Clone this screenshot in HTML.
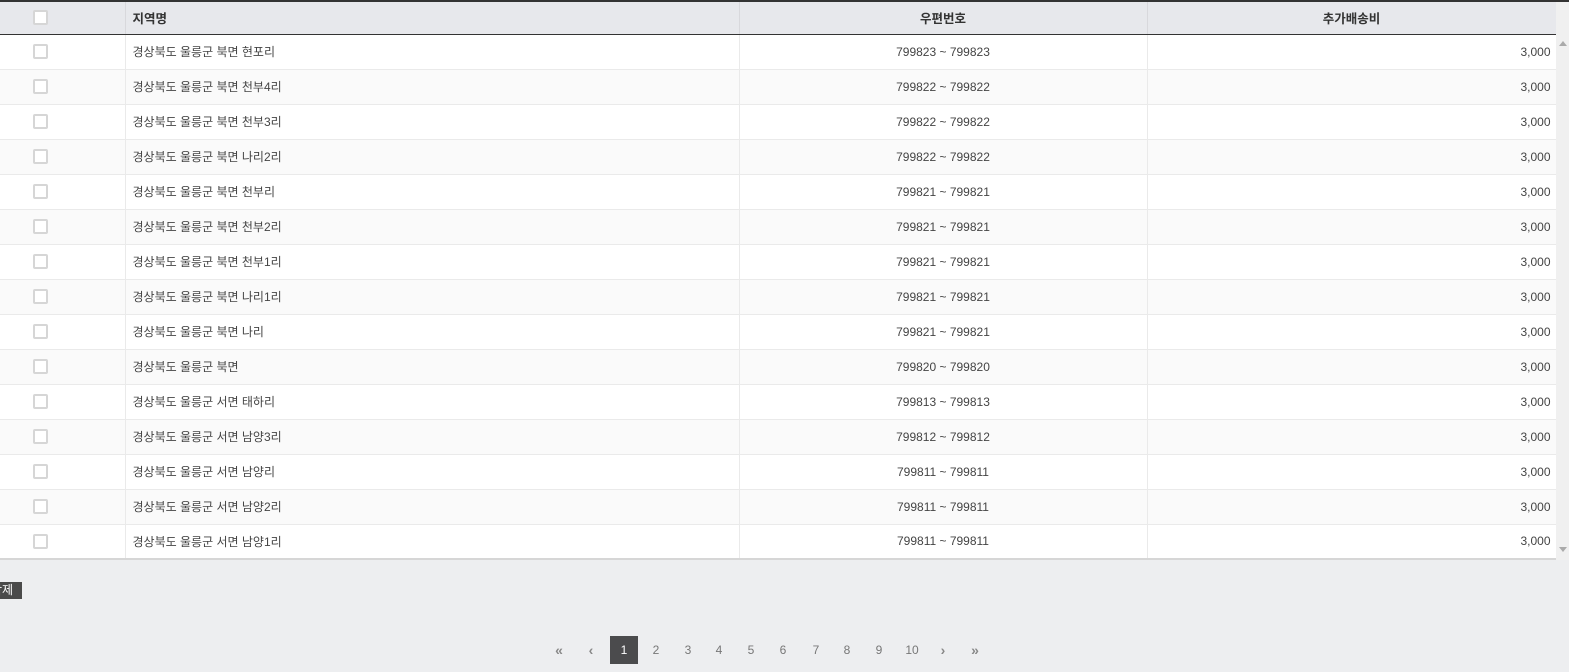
<!DOCTYPE html>
<html><head><meta charset="utf-8"><style>
*{margin:0;padding:0;box-sizing:border-box}
body{width:1569px;height:672px;overflow:hidden;background:#edeef0;font-family:"Liberation Sans","Noto Sans CJK KR",sans-serif;font-size:12px;color:#444;position:relative}
.top{position:absolute;left:0;top:0;width:1569px;height:2px;background:#333}
table{position:absolute;left:0;top:2px;width:1556px;border-collapse:collapse;table-layout:fixed}
th{height:32px;background:#e7e8ec;border-bottom:1px solid #333;border-right:1px solid #d8d8dc;font-weight:bold;color:#333;font-size:12.5px;padding:0}
td{height:35px;border-bottom:1px solid #eaeaea;border-right:1px solid #eaeaea;background:#fff;padding:0}
tr:nth-child(odd) td{background:#fafafa}
tr:last-child td{border-bottom:2px solid #d6d6d6}
.cb{width:15px;height:15px;border:2px solid #d6d6d6;background:#fff;border-radius:2px;margin-left:33px;display:block}
.l{text-align:left;padding-left:7px}.c{text-align:center}.r{text-align:right;padding-right:5px}
.sb{position:absolute;left:1556px;top:2px;width:13px;height:558px;background:#f0f0f0}
.btn{position:absolute;left:-12px;top:582px;width:34px;height:17px;background:#4a4a4a;color:#fff;font-size:12px;line-height:17px;white-space:nowrap;padding-left:3px}
.pg{position:absolute;top:636px;height:28px;width:28px;line-height:28px;text-align:center;color:#777;font-size:12px}
.on{background:#4b4b4d;color:#fff}
.ar{font-weight:bold;color:#888;font-size:14px}
</style></head><body>
<div class="top"></div>
<table>
<colgroup><col style="width:125px"><col style="width:614px"><col style="width:408px"><col style="width:409px"></colgroup>
<tr><th><span class="cb"></span></th><th class="l">지역명</th><th>우편번호</th><th>추가배송비</th></tr>
<tr><td><span class="cb"></span></td><td class="l">경상북도 울릉군 북면 현포리</td><td class="c">799823 ~ 799823</td><td class="r">3,000</td></tr>
<tr><td><span class="cb"></span></td><td class="l">경상북도 울릉군 북면 천부4리</td><td class="c">799822 ~ 799822</td><td class="r">3,000</td></tr>
<tr><td><span class="cb"></span></td><td class="l">경상북도 울릉군 북면 천부3리</td><td class="c">799822 ~ 799822</td><td class="r">3,000</td></tr>
<tr><td><span class="cb"></span></td><td class="l">경상북도 울릉군 북면 나리2리</td><td class="c">799822 ~ 799822</td><td class="r">3,000</td></tr>
<tr><td><span class="cb"></span></td><td class="l">경상북도 울릉군 북면 천부리</td><td class="c">799821 ~ 799821</td><td class="r">3,000</td></tr>
<tr><td><span class="cb"></span></td><td class="l">경상북도 울릉군 북면 천부2리</td><td class="c">799821 ~ 799821</td><td class="r">3,000</td></tr>
<tr><td><span class="cb"></span></td><td class="l">경상북도 울릉군 북면 천부1리</td><td class="c">799821 ~ 799821</td><td class="r">3,000</td></tr>
<tr><td><span class="cb"></span></td><td class="l">경상북도 울릉군 북면 나리1리</td><td class="c">799821 ~ 799821</td><td class="r">3,000</td></tr>
<tr><td><span class="cb"></span></td><td class="l">경상북도 울릉군 북면 나리</td><td class="c">799821 ~ 799821</td><td class="r">3,000</td></tr>
<tr><td><span class="cb"></span></td><td class="l">경상북도 울릉군 북면</td><td class="c">799820 ~ 799820</td><td class="r">3,000</td></tr>
<tr><td><span class="cb"></span></td><td class="l">경상북도 울릉군 서면 태하리</td><td class="c">799813 ~ 799813</td><td class="r">3,000</td></tr>
<tr><td><span class="cb"></span></td><td class="l">경상북도 울릉군 서면 남양3리</td><td class="c">799812 ~ 799812</td><td class="r">3,000</td></tr>
<tr><td><span class="cb"></span></td><td class="l">경상북도 울릉군 서면 남양리</td><td class="c">799811 ~ 799811</td><td class="r">3,000</td></tr>
<tr><td><span class="cb"></span></td><td class="l">경상북도 울릉군 서면 남양2리</td><td class="c">799811 ~ 799811</td><td class="r">3,000</td></tr>
<tr><td><span class="cb"></span></td><td class="l">경상북도 울릉군 서면 남양1리</td><td class="c">799811 ~ 799811</td><td class="r">3,000</td></tr>
</table>
<div class="sb"><div style="position:absolute;left:3px;top:39px;width:0;height:0;border-left:4px solid transparent;border-right:4px solid transparent;border-bottom:5px solid #aaa"></div><div style="position:absolute;left:3px;top:545px;width:0;height:0;border-left:4px solid transparent;border-right:4px solid transparent;border-top:5px solid #aaa"></div></div>
<div class="btn">삭제</div>
<div class="pg ar" style="left:545px">«</div>
<div class="pg ar" style="left:577px">‹</div>
<div class="pg on" style="left:610px">1</div>
<div class="pg" style="left:642px">2</div>
<div class="pg" style="left:674px">3</div>
<div class="pg" style="left:705px">4</div>
<div class="pg" style="left:737px">5</div>
<div class="pg" style="left:769px">6</div>
<div class="pg" style="left:802px">7</div>
<div class="pg" style="left:833px">8</div>
<div class="pg" style="left:865px">9</div>
<div class="pg" style="left:898px">10</div>
<div class="pg ar" style="left:929px">›</div>
<div class="pg ar" style="left:961px">»</div>
</body></html>
